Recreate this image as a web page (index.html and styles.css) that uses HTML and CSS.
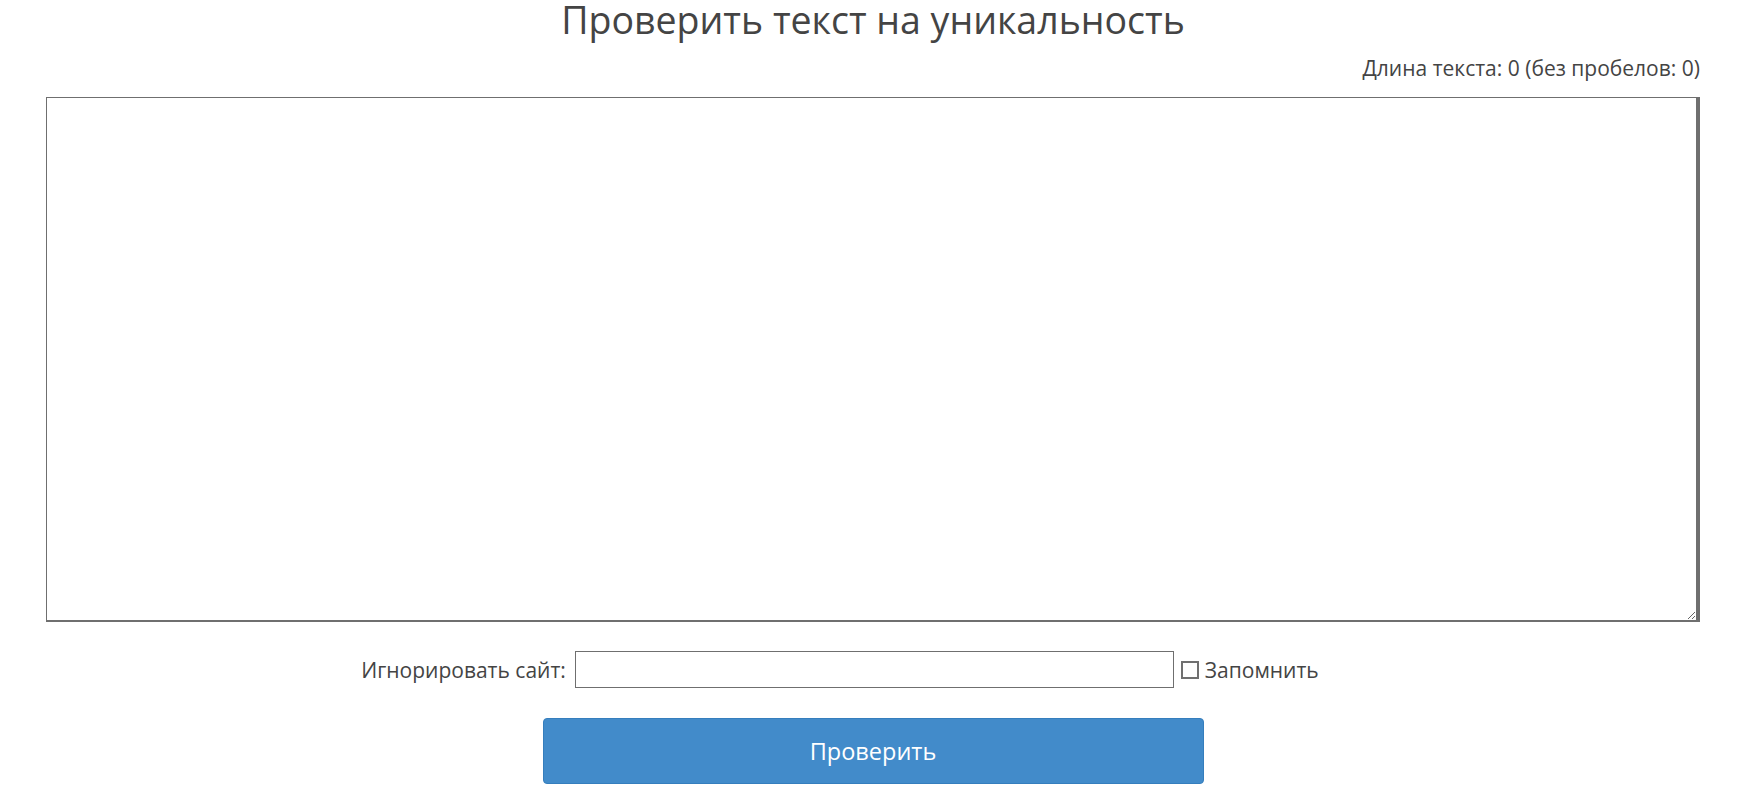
FILE: index.html
```html
<!DOCTYPE html>
<html lang="ru">
<head>
    <meta charset="UTF-8">
    <meta name="viewport" content="width=device-width, initial-scale=1.0">
    <title>Проверить текст на уникальность</title>
    <link rel="stylesheet" href="styles.css">
</head>
<body>

    <div class="checker">
        <!-- Page title -->
        <h1 class="checker-title">Проверить текст на уникальность</h1>

        <!-- Text length counter -->
        <div class="text-counter">Длина текста: <span id="len">0</span> (без пробелов: <span id="lenNoSpaces">0</span>)</div>

        <!-- Text to check -->
        <textarea id="text" class="text-input"></textarea>

        <!-- Ignore site row -->
        <div class="ignore-row">
            <label for="ignore" class="ignore-label">Игнорировать сайт:</label>
            <input type="text" id="ignore" class="ignore-input">
            <label class="remember">
                <input type="checkbox" class="remember-box">
                <span>Запомнить</span>
            </label>
        </div>

        <!-- Submit -->
        <div class="actions">
            <button type="button" class="btn-check">Проверить</button>
        </div>
    </div>

</body>
</html>
```

FILE: styles.css
```css
/* Page base */
body {
    margin: 0;
    font-family: "Open Sans", "Liberation Sans", sans-serif;
    color: #444;
    background: #fff;
}

/* Main column */
.checker {
    padding: 0 52px 0 46px;
}

/* Title */
.checker-title {
    margin: 0;
    text-align: center;
    font-size: 37.5px;
    line-height: 40px;
    font-weight: 400;
    color: #444;
}

/* Counter above the textarea */
.text-counter {
    margin-top: 14px;
    text-align: right;
    font-size: 21px;
    line-height: 28px;
    color: #444;
}

/* Big text field */
.text-input {
    display: block;
    box-sizing: border-box;
    width: 100%;
    height: 525px;
    margin-top: 15px;
    border-style: solid;
    border-color: #6f6f6f;
    border-width: 1px 4px 2px 1px;
    padding: 4px;
    font-family: "Open Sans", "Liberation Sans", sans-serif;
    font-size: 16px;
    background: #fff;
}

/* Ignore site row */
.ignore-row {
    display: flex;
    align-items: center;
    justify-content: center;
    margin-top: 29px;
    padding-right: 66px;
    font-size: 21px;
    color: #444;
}

.ignore-label {
    margin-right: 9px;
}

.ignore-input {
    box-sizing: border-box;
    width: 599px;
    height: 37px;
    border: 1px solid #6f6f6f;
    padding: 2px 6px;
    font-size: 16px;
}

.remember {
    display: flex;
    align-items: center;
    margin-left: 7px;
}

.remember-box {
    appearance: none;
    -webkit-appearance: none;
    width: 18px;
    height: 18px;
    margin: 0 6px 0 0;
    border: 2px solid #707070;
    background: #fff;
}

/* Submit button */
.actions {
    display: flex;
    justify-content: center;
    margin-top: 30px;
}

.btn-check {
    width: 661px;
    height: 66px;
    background-color: #428bca;
    border: 1px solid #357ebd;
    border-radius: 4px;
    color: #fff;
    font-family: "Open Sans", "Liberation Sans", sans-serif;
    font-size: 23.5px;
    cursor: pointer;
}
```
